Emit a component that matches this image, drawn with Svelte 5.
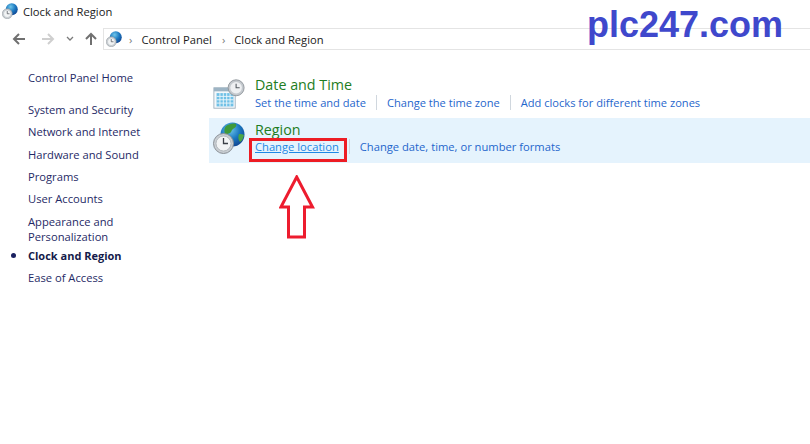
<script>
  const sideLinks = [
    { label: "System and Security" },
    { label: "Network and Internet" },
    { label: "Hardware and Sound" },
    { label: "Programs" },
    { label: "User Accounts" },
    { label: "Appearance and\nPersonalization" },
    { label: "Clock and Region", current: true },
    { label: "Ease of Access" }
  ];
</script>

{#snippet clockGlobe(size, land)}
  <svg width={size} height={size} viewBox="0 0 32 32">
    <defs>
      <radialGradient id="globe-{size}" cx="0.4" cy="0.3" r="0.8">
        <stop offset="0" stop-color="#6fc6ea" />
        <stop offset="0.5" stop-color="#1b78c0" />
        <stop offset="1" stop-color="#0d3a88" />
      </radialGradient>
    </defs>
    <circle cx="19.500" cy="12.500" r="12" fill="url(#globe-{size})" />
    {#if land}
      <path d="M13 4c3-2 8-3 10-2 1 2-1 4-3 5-2 1-1 3-3 4-3 1-4 2-5 1-1-3-1-6 1-8z" fill="#3f9a3a" />
      <path d="M26 12c2 0 4 0 5 1-1 4-2 6-4 7-2-2-2-6-1-8z" fill="#4aa545" />
    {/if}
    <circle cx="10.500" cy="21.500" r="10" fill="#c9ced3" stroke="#8a9096" stroke-width="1" />
    <circle cx="10.500" cy="21.500" r="7.500" fill="#f2f4f5" stroke="#a7adb3" stroke-width="0.8" />
    <path d="M10.500 16V21.500h4.500" fill="none" stroke="#3b4047" stroke-width="1.300" />
  </svg>
{/snippet}

<div class="window">
  <header class="title">
    {@render clockGlobe(16, false)}
    <span>Clock and Region</span>
  </header>

  <nav class="toolbar">
    <svg class="nav" width="14" height="14" viewBox="0 0 14 14"><path d="M13 7H2M7 2L2 7l5 5" fill="none" stroke="#707070" stroke-width="2" /></svg>
    <svg class="nav forward" width="14" height="14" viewBox="0 0 14 14"><path d="M1 7h11M7 2l5 5-5 5" fill="none" stroke="#cfcfcf" stroke-width="2" /></svg>
    <svg class="nav chevron" width="8" height="6" viewBox="0 0 8 6"><path d="M1 1l3 3 3-3" fill="none" stroke="#7a7a7a" stroke-width="1.300" /></svg>
    <svg class="nav up" width="14" height="14" viewBox="0 0 14 14"><path d="M7 13V2M2 7l5-5 5 5" fill="none" stroke="#707070" stroke-width="2" /></svg>
    <div class="address">
      {@render clockGlobe(16, false)}
      <span class="sep">›</span>
      <span class="crumb">Control Panel</span>
      <span class="sep">›</span>
      <span class="crumb">Clock and Region</span>
    </div>
  </nav>

  <div class="body">
    <aside class="side">
      <a class="home">Control Panel Home</a>
      <ul>
        {#each sideLinks as link}
          <li class:current={link.current}>{link.label}</li>
        {/each}
      </ul>
    </aside>

    <main class="content">
      <section class="group">
        <svg class="group-icon" width="32" height="32" viewBox="0 0 36 34">
          <rect x="1" y="10" width="24" height="23" fill="#f4f8fb" stroke="#9fb0bd" />
          <rect x="1" y="10" width="24" height="4" fill="#9db4c4" />
          <path d="M4 16h19v15H4z" fill="#6fc0e6" />
          <path d="M7.800 16v15M11.600 16v15M15.400 16v15M19.200 16v15M4 19.700h19M4 23.500h19M4 27.200h19" stroke="#eef7fb" stroke-width="1" />
          <circle cx="26" cy="10" r="9" fill="#c4c9ce" stroke="#8f959b" />
          <circle cx="26" cy="10" r="6.500" fill="#eef0f2" />
          <path d="M26 5.500V10h4" fill="none" stroke="#555b62" stroke-width="1.200" />
        </svg>
        <div>
          <h2>Date and Time</h2>
          <div class="links">
            <a>Set the time and date</a>
            <a>Change the time zone</a>
            <a>Add clocks for different time zones</a>
          </div>
        </div>
      </section>

      <section class="group active">
        <span class="group-icon">{@render clockGlobe(32, true)}</span>
        <div>
          <h2>Region</h2>
          <div class="links">
            <a class="hover">Change location</a>
            <a>Change date, time, or number formats</a>
          </div>
        </div>
      </section>
    </main>
  </div>

  <!-- annotations drawn on top of the screenshot -->
  <div class="watermark">plc247.com</div>
  <div class="callout"></div>
  <svg class="arrow" width="36" height="66" viewBox="0 0 36 66">
    <path d="M17.700 2L33.500 32H25.500V62H9.500V32H1.900Z" fill="none" stroke="#ed1c2e" stroke-width="3" />
  </svg>
</div>

<style>
  :global(body) {
    margin: 0;
    background: #fff;
  }

  .window {
    position: relative;
    width: 810px;
    height: 444px;
    overflow: hidden;
    font-family: "Open Sans", sans-serif;
    font-size: 11.200px;
    color: #1a1a1a;
    background: #fff;
  }

  .title {
    display: flex;
    align-items: center;
    gap: 5px;
    height: 22px;
    padding-left: 2px;
  }

  .toolbar {
    display: flex;
    align-items: center;
    height: 22px;
    margin-top: 6px;
    padding-left: 12px;
  }

  .nav.forward {
    margin-left: 15px;
  }

  .nav.chevron {
    margin-left: 11px;
  }

  .nav.up {
    margin-left: 10px;
  }

  .address {
    display: flex;
    align-items: center;
    gap: 7px;
    flex: 1;
    height: 20px;
    margin-left: 5px;
    padding-left: 2px;
    border: 1px solid #e4e4e4;
    border-right: none;
  }

  .sep {
    margin-right: 2px;
    color: #777;
  }

  .crumb + .sep {
    margin-left: 3px;
  }

  .body {
    display: flex;
    padding-top: 18px;
  }

  .side {
    flex: none;
    width: 209px;
    padding-left: 28px;
    box-sizing: border-box;
    color: #1f2a66;
  }

  .home {
    display: block;
    line-height: 16px;
    margin-top: 2px;
  }

  ul {
    list-style: none;
    margin: 16px 0 0;
    padding: 0;
  }

  li {
    position: relative;
    line-height: 15px;
    margin-bottom: 7.350px;
    white-space: pre-line;
  }

  li.current {
    font-size: 11px;
    font-weight: 700;
    color: #141a4a;
    margin-top: -3px;
  }

  li.current::before {
    content: "";
    position: absolute;
    left: -17px;
    top: 5px;
    width: 5px;
    height: 5px;
    border-radius: 50%;
    background: #1a2060;
  }

  .content {
    flex: 1;
    padding-top: 6px;
  }

  .group {
    display: flex;
    gap: 10px;
    height: 44px;
    padding-left: 4px;
    box-sizing: border-box;
  }

  .group.active {
    height: 45px;
    background: #e5f3fd;
  }

  .group-icon {
    flex: none;
    display: block;
    height: 32px;
    margin-top: 4px;
  }

  h2 {
    margin: 0;
    padding-top: 1px;
    font-size: 14.300px;
    font-weight: 400;
    line-height: 20px;
    color: #1e7d23;
  }

  .active h2 {
    padding-top: 2px;
    line-height: 19px;
  }

  .links {
    display: flex;
    font-size: 11.100px;
    line-height: 15px;
    color: #1f66cc;
  }

  .active .links {
    font-size: 11.200px;
  }

  .links a + a {
    margin-left: 10px;
    padding-left: 10px;
    border-left: 1px solid #d0d7de;
  }

  .hover {
    color: #1e88e5;
    text-decoration: underline;
  }

  .watermark {
    position: absolute;
    left: 587px;
    top: 5px;
    font-family: "Liberation Sans", sans-serif;
    font-size: 36px;
    font-weight: 700;
    line-height: 40px;
    color: #3f48cc;
  }

  .callout {
    position: absolute;
    left: 249px;
    top: 138px;
    width: 98px;
    height: 24px;
    box-sizing: border-box;
    border: 3px solid #ed1c24;
  }

  .arrow {
    position: absolute;
    left: 279px;
    top: 175px;
  }
</style>
